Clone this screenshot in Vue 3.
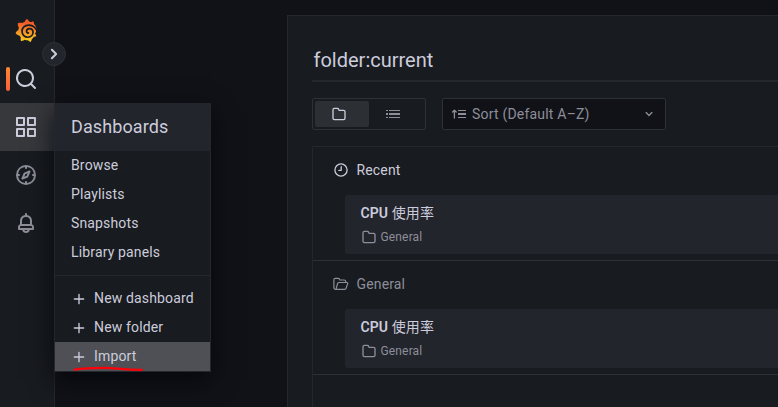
<script setup>
const icons = {
  search: 'M21.71,20.29,18,16.61A9,9,0,1,0,16.61,18l3.68,3.68a1,1,0,0,0,1.42,0A1,1,0,0,0,21.71,20.29ZM11,18a7,7,0,1,1,7-7A7,7,0,0,1,11,18Z',
  apps: 'M10,13H3a1,1,0,0,0-1,1v7a1,1,0,0,0,1,1h7a1,1,0,0,0,1-1V14A1,1,0,0,0,10,13ZM9,20H4V15H9ZM21,2H14a1,1,0,0,0-1,1v7a1,1,0,0,0,1,1h7a1,1,0,0,0,1-1V3A1,1,0,0,0,21,2ZM20,9H15V4h5Zm1,4H14a1,1,0,0,0-1,1v7a1,1,0,0,0,1,1h7a1,1,0,0,0,1-1V14A1,1,0,0,0,21,13Zm-1,7H15V15h5ZM10,2H3A1,1,0,0,0,2,3v7a1,1,0,0,0,1,1h7a1,1,0,0,0,1-1V3A1,1,0,0,0,10,2ZM9,9H4V4H9Z',
  compass: 'M12,2A10,10,0,1,0,22,12,10,10,0,0,0,12,2Zm1,17.93V19a1,1,0,0,0-2,0v.93A8,8,0,0,1,4.07,13H5a1,1,0,0,0,0-2H4.07A8,8,0,0,1,11,4.07V5a1,1,0,0,0,2,0V4.07A8,8,0,0,1,19.93,11H19a1,1,0,0,0,0,2h.93A8,8,0,0,1,13,19.93ZM15.14,7.55l-5,2.12a1,1,0,0,0-.52.52l-2.12,5a1,1,0,0,0,.21,1.1,1,1,0,0,0,.7.3.93.93,0,0,0,.4-.09l5-2.12a1,1,0,0,0,.52-.52l2.12-5a1,1,0,0,0-1.31-1.31Zm-2.49,5.1-2.28,1,1-2.28,2.28-1Z',
  bell: 'M18,13.18V10a6,6,0,0,0-5-5.91V3a1,1,0,0,0-2,0V4.09A6,6,0,0,0,6,10v3.18A3,3,0,0,0,4,16v2a1,1,0,0,0,1,1H8.14a4,4,0,0,0,7.72,0H19a1,1,0,0,0,1-1V16A3,3,0,0,0,18,13.18ZM8,10a4,4,0,0,1,8,0v3H8Zm4,10a2,2,0,0,1-1.72-1h3.44A2,2,0,0,1,12,20Zm6-3H6V16a1,1,0,0,1,1-1H17a1,1,0,0,1,1,1Z',
  folder: 'M19,5.5H12.72l-.32-1a3,3,0,0,0-2.84-2H5a3,3,0,0,0-3,3v13a3,3,0,0,0,3,3H19a3,3,0,0,0,3-3V8.5A3,3,0,0,0,19,5.5Zm1,13a1,1,0,0,1-1,1H5a1,1,0,0,1-1-1V5.5a1,1,0,0,1,1-1H9.56a1,1,0,0,1,.95.68l.54,1.64A1,1,0,0,0,12,7.5h7a1,1,0,0,1,1,1Z',
  angleRight: 'M14.83,11.29,10.59,7.05a1,1,0,0,0-1.42,0,1,1,0,0,0,0,1.41L12.71,12,9.17,15.54a1,1,0,0,0,0,1.41,1,1,0,0,0,.71.29,1,1,0,0,0,.71-.29l4.24-4.24A1,1,0,0,0,14.83,11.29Z',
  angleDown: 'M17,9.17a1,1,0,0,0-1.41,0L12,12.71,8.46,9.17a1,1,0,0,0-1.41,0,1,1,0,0,0,0,1.42l4.24,4.24a1,1,0,0,0,1.42,0L17,10.59A1,1,0,0,0,17,9.17Z',
  plus: 'M19,11H13V5a1,1,0,0,0-2,0v6H5a1,1,0,0,0,0,2h6v6a1,1,0,0,0,2,0V13h6a1,1,0,0,0,0-2Z',
}
const badge = 'M342,161.2c-0.6-6.1-1.6-13.1-3.6-20.9c-2-7.7-5-16.2-9.4-25c-4.4-8.8-10.1-17.9-17.5-26.8c-2.9-3.5-6.1-6.9-9.5-10.2c5.1-20.3-6.2-37.9-6.2-37.9c-19.5-1.2-31.9,6.1-36.5,9.4c-0.8-0.3-1.5-0.7-2.3-1c-3.3-1.3-6.7-2.6-10.3-3.7c-3.5-1.1-7.1-2.1-10.8-3c-3.7-0.9-7.4-1.6-11.2-2.2c-0.7-0.1-1.3-0.2-2-0.3c-8.5-27.2-32.9-38.6-32.9-38.6c-27.3,17.3-32.4,41.5-32.4,41.5s-0.1,0.5-0.3,1.4c-1.5,0.4-3,0.9-4.5,1.3c-2.1,0.6-4.2,1.4-6.2,2.2c-2.1,0.8-4.1,1.6-6.2,2.5c-4.1,1.8-8.2,3.8-12.2,6c-3.9,2.2-7.7,4.6-11.4,7.1c-0.5-0.2-1-0.4-1-0.4c-37.8-14.4-71.3,2.9-71.3,2.9c-3.1,40.2,15.1,65.5,18.7,70.1c-0.9,2.5-1.7,5-2.5,7.5c-2.8,9.1-4.9,18.4-6.2,28.1c-0.2,1.4-0.4,2.8-0.5,4.2C18.8,192.7,8.5,228,8.5,228c29.1,33.5,63.1,35.6,63.1,35.6c0,0,0.1-0.1,0.1-0.1c4.3,7.7,9.3,15,14.9,21.9c2.4,2.9,4.8,5.6,7.4,8.3c-10.6,30.4,1.5,55.6,1.5,55.6c32.4,1.2,53.7-14.2,58.2-17.7c3.2,1.1,6.5,2.1,9.8,2.9c10,2.6,20.2,4.1,30.4,4.5c2.5,0.1,5.1,0.2,7.6,0.1l1.2,0l0.8,0l1.6,0l1.6-0.1l0,0.1c15.3,21.8,42.1,24.9,42.1,24.9c19.1-20.1,20.2-40.1,20.2-44.4l0-1.8c4-2.8,7.8-5.8,11.4-9.1c7.6-6.9,14.3-14.8,19.9-23.3c0.5-0.8,1-1.6,1.5-2.4c21.6,1.2,36.9-13.4,36.9-13.4c-3.6-22.5-16.4-33.5-19.1-35.6C330,215 342,190 342,161.2Z'
const links = ['Browse', 'Playlists', 'Snapshots', 'Library panels']
const actions = ['New dashboard', 'New folder', 'Import']
const sections = [
  { title: 'Recent', icon: 'clock', items: [{ name: 'CPU', suffix: '使用率', folder: 'General' }] },
  { title: 'General', icon: 'open', items: [{ name: 'CPU', suffix: '使用率', folder: 'General' }] },
]
</script>

<template>
  <div class="app">
    <nav class="sidebar">
      <div class="brand">
        <svg width="22" height="23" viewBox="0 0 351 365">
          <defs>
            <linearGradient id="flame" gradientUnits="userSpaceOnUse" x1="175" y1="390" x2="175" y2="60">
              <stop offset="0" stop-color="#fcd91f" />
              <stop offset="1" stop-color="#f15b2a" />
            </linearGradient>
          </defs>
          <path :d="badge" fill="url(#flame)" />
          <path class="swirl" d="M358 205C330 130 280 97 218 97C155 97 112 142 112 196C112 250 155 290 205 290C255 290 288 252 288 212C288 176 262 152 230 152C202 152 184 172 184 198C184 214 198 226 214 222" />
        </svg>
      </div>
      <a class="nav-item bright marked"><svg class="nav-icon" viewBox="0 0 24 24"><path :d="icons.search" /></svg></a>
      <a class="nav-item bright active"><svg class="nav-icon" viewBox="0 0 24 24"><path :d="icons.apps" /></svg></a>
      <a class="nav-item"><svg class="nav-icon" viewBox="0 0 24 24"><path :d="icons.compass" /></svg></a>
      <a class="nav-item"><svg class="nav-icon" viewBox="0 0 24 24"><path :d="icons.bell" /></svg></a>

      <div class="menu">
        <div class="menu-header">Dashboards</div>
        <a v-for="l in links" :key="l" class="menu-item"><span class="label">{{ l }}</span></a>
        <div class="menu-divider"></div>
        <a v-for="a in actions" :key="a" class="menu-item" :class="{ hovered: a === 'Import' }">
          <svg class="plus" viewBox="0 0 24 24"><path :d="icons.plus" /></svg><span class="label">{{ a }}</span>
        </a>
        <svg class="scribble" width="72" height="6" viewBox="0 0 72 6">
          <path d="M1.5 3.6C8 2.4 20 1.8 31 1.8C42 1.8 50 3.8 69 3.8" />
        </svg>
      </div>
      <button class="toggle"><svg width="24" height="24" viewBox="0 0 24 24"><path :d="icons.angleRight" /></svg></button>
    </nav>

    <main class="panel">
      <div class="query">folder:current</div>
      <div class="toolbar">
        <div class="radio">
          <span class="option selected"><svg width="16" height="16" viewBox="0 0 24 24"><path :d="icons.folder" /></svg></span>
          <span class="option">
            <svg width="16" height="16" viewBox="0 0 16 16"><path d="M1 4h2v1H1zM1 7h2v2H1zM1 11h2v1H1zM4 4h11v1H4zM4 7h11v2H4zM4 11h11v1H4z" /></svg>
          </span>
        </div>
        <div class="select">
          <svg width="16" height="16" viewBox="0 0 16 16"><path d="M3.4 4.3v7.7M1.6 6l1.8-1.8 1.8 1.8" class="line" /><path d="M7 4h8v1H7zM7 7h8v2H7zM7 11h8v1H7z" /></svg>
          <span class="select-text">Sort (Default A–Z)</span>
          <svg width="16" height="16" viewBox="0 0 24 24"><path :d="icons.angleDown" /></svg>
        </div>
      </div>
      <div class="results">
        <section v-for="s in sections" :key="s.title" class="section">
          <header class="section-header" :class="{ muted: s.icon === 'open' }">
            <svg v-if="s.icon === 'clock'" width="16" height="16" viewBox="0 0 16 16"><circle cx="8" cy="8" r="6.1" class="line" /><path d="M8.2 4.6V8.3H5.8" class="line" /></svg>
            <svg v-else width="16" height="16" viewBox="0 0 16 16"><path d="M2.6 13.3C1.5 13.3.9 12.6.9 11.8V3.7C.9 2.8 1.5 2.3 2.3 2.3H5.3C6 2.3 6.3 2.6 6.5 3.2L6.8 4H11.2C12.2 4 12.7 4.6 12.7 5.4V6.4M2.6 13.3H11.6C12.4 13.3 12.9 12.9 13.1 12.2L14.7 7.6C14.9 6.9 14.5 6.5 13.9 6.5H6C5.2 6.5 4.8 6.8 4.6 7.5L3.3 12.2C3.1 12.9 2.9 13.3 2.6 13.3Z" class="line thin" /></svg>
            <span>{{ s.title }}</span>
          </header>
          <article v-for="i in s.items" :key="i.name" class="card">
            <div class="card-name">{{ i.name }} <span class="cjk">{{ i.suffix }}</span></div>
            <div class="card-folder">
              <svg width="16" height="16" viewBox="0 0 24 24"><path :d="icons.folder" /></svg>{{ i.folder }}
            </div>
          </article>
        </section>
      </div>
    </main>
  </div>
</template>

<style>
body {
  background: #111217;
  overflow: hidden;
}
</style>

<style scoped>
.app {
  display: flex;
  height: 407px;
  overflow: hidden;
  background: #111217;
  color: #ccccdc;
  font: 400 14px/22px Roboto, "Noto Sans CJK SC", sans-serif;
  letter-spacing: 0.15px;
}
* {
  box-sizing: border-box;
}
svg {
  display: block;
  flex: none;
  fill: currentColor;
}
.line {
  fill: none;
  stroke: currentColor;
  stroke-width: 1.3;
  stroke-linecap: round;
  stroke-linejoin: round;
}
.thin {
  stroke-width: 1.2;
}
.label {
  padding-bottom: 2px;
}
.sidebar {
  position: relative;
  z-index: 1;
  width: 55px;
  flex: none;
  background: #181b1f;
  border-right: 1px solid #25272c;
}
.brand {
  height: 55px;
  padding: 19px 0 0 15px;
}
.swirl {
  fill: none;
  stroke: #181b1f;
  stroke-width: 27;
  stroke-linecap: round;
}
.nav-item {
  position: relative;
  display: flex;
  align-items: center;
  height: 48px;
  padding-left: 14px;
  color: #8d8e9a;
}
.bright {
  color: #ccccdc;
}
.active {
  background: #36383c;
}
.marked::before {
  content: "";
  position: absolute;
  left: 6px;
  top: 12px;
  width: 4px;
  height: 24px;
  border-radius: 2px;
  background: linear-gradient(#ff8833, #f55f3e);
}
.nav-icon {
  width: 24px;
  height: 24px;
}
.menu {
  position: absolute;
  left: 54px;
  top: 103px;
  width: 157px;
  background: #181b1f;
  border: 1px solid #25272c;
  border-top: 0;
  box-shadow: 0 8px 24px rgba(1, 4, 9, 0.75);
}
.menu-header {
  height: 48px;
  padding-left: 16px;
  background: #22252b;
  font-size: 18px;
  line-height: 48px;
  letter-spacing: 0.1px;
}
.menu-item {
  display: flex;
  align-items: center;
  height: 29px;
  padding-left: 16px;
  white-space: nowrap;
}
.menu-divider {
  height: 1px;
  margin: 8px 0;
  background: #25272c;
}
.hovered {
  background: #4e5056;
}
.plus {
  width: 16px;
  height: 16px;
  margin-right: 7px;
}
.scribble {
  position: absolute;
  left: 18px;
  bottom: -1px;
  fill: none;
  stroke: #ff0008;
  stroke-width: 2.2;
  stroke-linecap: round;
}
.toggle {
  position: absolute;
  left: 42px;
  top: 42px;
  display: flex;
  align-items: center;
  justify-content: center;
  width: 24px;
  height: 24px;
  padding: 0;
  border: 1px solid #2e3036;
  border-radius: 50%;
  background: #22252b;
  color: #ccccdc;
}
.panel {
  flex: 1;
  margin: 15px 0 0 232px;
  padding: 24px 0 0 24px;
  background: #181b1f;
  border: solid #25272c;
  border-width: 1px 0 0 1px;
}
.query {
  height: 42px;
  padding-left: 1.5px;
  border-bottom: 2px solid #25272c;
  font-size: 20px;
  line-height: 40px;
  letter-spacing: 0;
}
.toolbar {
  display: flex;
  gap: 16px;
  margin: 16px 0;
}
.radio {
  display: flex;
  width: 114px;
  height: 32px;
  padding: 2px;
  border: 1px solid #2d3036;
  border-radius: 2px;
}
.option {
  display: flex;
  align-items: center;
  justify-content: center;
  width: 54px;
  padding-right: 6px;
  border-radius: 2px;
  color: #8d8e9a;
}
.selected {
  background: #2c2f33;
  color: #ccccdc;
}
.select {
  display: flex;
  align-items: center;
  width: 224px;
  height: 32px;
  padding: 0 8px;
  border: 1px solid #2d3036;
  border-radius: 2px;
  background: #111217;
  color: #8d8e9a;
}
.select-text {
  flex: 1;
  padding-left: 5px;
  letter-spacing: 0.2px;
}
.results {
  height: 400px;
  border: solid #25272c;
  border-width: 1px 0 0 1px;
  border-radius: 2px 0 0 0;
}
.section {
  height: 114px;
  padding-bottom: 6px;
  border-bottom: 1px solid #2d3036;
}
.section-header {
  display: flex;
  align-items: center;
  gap: 7.5px;
  height: 48px;
  padding: 0 0 2px 20px;
}
.muted {
  color: #8d8e9a;
}
.card {
  height: 59px;
  margin-left: 32px;
  padding: 7px 0 0 15.5px;
  border-radius: 2px 0 0 2px;
  background: #22252b;
}
.card-name {
  font-weight: 600;
  letter-spacing: 0.1px;
}
.cjk {
  font-weight: 400;
}
.card-folder {
  display: flex;
  align-items: center;
  gap: 4px;
  height: 26px;
  color: #8d8e9a;
  font-size: 12px;
}
</style>
